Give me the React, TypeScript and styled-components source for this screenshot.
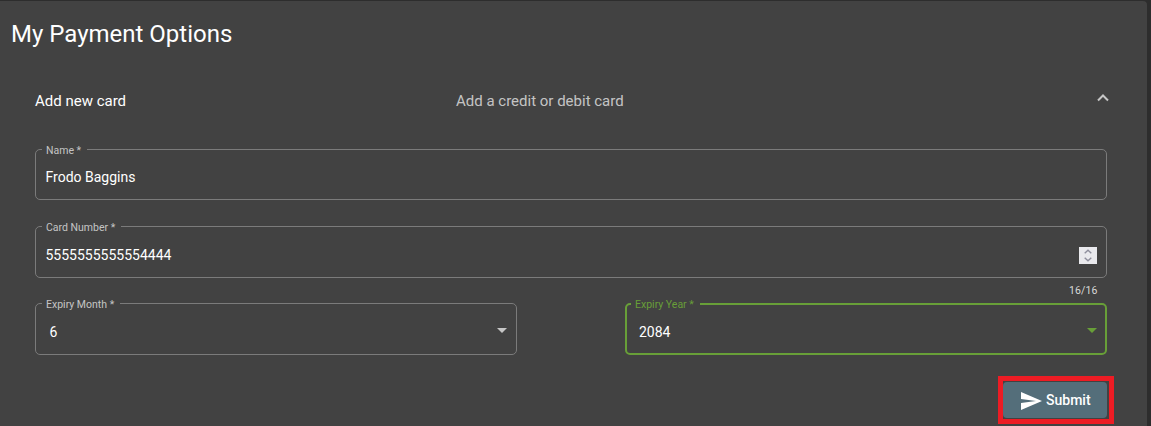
import React from "react";
import styled, { createGlobalStyle } from "styled-components";

const GlobalStyle = createGlobalStyle`
  * { box-sizing: border-box; }
  body {
    margin: 0;
    background: #303030;
    font-family: Roboto, "Liberation Sans", sans-serif;
    overflow: hidden;
  }
`;

const Page = styled.main`
  height: 426px;
  padding: 1px 4px 0 0;
  overflow: hidden;
  background: #2d2d2d;
`;

const Card = styled.section`
  height: 440px;
  background: #424242;
  border-radius: 0 4px 0 0;
  color: #fff;
`;

const Title = styled.h1`
  margin: 0;
  padding: 17px 0 0 11px;
  font-size: 24px;
  line-height: 32px;
  font-weight: 400;
`;

const PanelHeader = styled.header`
  display: grid;
  grid-template-columns: 421px 1fr 12px;
  align-items: center;
  height: 48px;
  margin: 27px 38px 0 35px;
  font-size: 15px;
`;

const PanelTitle = styled.span`
  color: #fff;
`;

const PanelDescription = styled.span`
  color: rgba(255, 255, 255, 0.7);
`;

const Chevron = styled.svg`
  display: block;
  width: 12px;
  height: 8px;
  margin-top: -6px;
`;

const Form = styled.form`
  display: flex;
  flex-direction: column;
  width: 1072px;
  margin: 24px 0 0 35px;
`;

const Field = styled.fieldset<{ $focused?: boolean; $tall?: boolean; $inset?: number }>`
  display: block;
  min-width: 0;
  height: ${(p) => (p.$tall ? 52 : 51)}px;
  margin: 0;
  padding: 0 9px 0 ${(p) => p.$inset ?? 9.5}px;
  border: ${(p) => (p.$focused ? "2px solid #689f38" : "1px solid #7b7b7b")};
  border-radius: 5px;
`;

const CardNumberField = styled(Field)`
  margin-top: 26px;
`;

const Label = styled.legend<{ $focused?: boolean; $shift: number }>`
  height: ${(p) => (p.$focused ? 2 : 1)}px;
  margin-left: ${(p) => p.$shift}px;
  padding: 0 6px 0 4px;
  font-size: 10.5px;
  line-height: 4px;
  white-space: nowrap;
  color: ${(p) => (p.$focused ? "#689f38" : "rgba(255, 255, 255, 0.7)")};
`;

const Value = styled.div<{ $offset?: number }>`
  display: flex;
  align-items: center;
  justify-content: space-between;
  height: 48px;
  padding-top: ${(p) => p.$offset ?? 7}px;
  font-size: 14px;
`;

const Spinner = styled.span`
  display: flex;
  flex-direction: column;
  align-items: center;
  justify-content: space-between;
  width: 18px;
  height: 17px;
  margin-top: 2px;
  padding: 2px 0;
  background: #e9e9ed;
`;

const SpinArrow = styled.svg`
  display: block;
  width: 8px;
  height: 5px;
`;

const Caret = styled.svg<{ $focused?: boolean }>`
  width: 10px;
  height: 5px;
  margin: -2px ${(p) => (p.$focused ? -1 : 0)}px 0 0;
  fill: ${(p) => (p.$focused ? "#689f38" : "#c6c6c6")};
`;

const Counter = styled.div`
  height: 25px;
  padding: 5px 9.5px 0 0;
  font-size: 10.5px;
  line-height: 15px;
  letter-spacing: 0.1px;
  text-align: right;
  color: rgba(255, 255, 255, 0.8);
`;

const ExpiryRow = styled.div`
  display: grid;
  grid-template-columns: 482px 482px;
  justify-content: space-between;
`;

const SubmitFrame = styled.div`
  align-self: flex-end;
  width: 116px;
  height: 48px;
  margin: 21px -7px 0 0;
  padding: 1px 0 0;
  border: 5px solid #ed1c24;
`;

const SubmitButton = styled.button`
  display: flex;
  align-items: center;
  gap: 4px;
  width: 104px;
  height: 36px;
  padding: 0 0 0 18px;
  border: 0;
  border-radius: 4px;
  background: #546e7a;
  color: #fff;
  font-family: inherit;
  font-size: 14px;
  font-weight: 500;
`;

const SendIcon = styled.svg`
  width: 21px;
  height: 18px;
  margin-top: 2px;
  fill: #fff;
`;

function SelectCaret({ focused = false }: { focused?: boolean }) {
  return (
    <Caret $focused={focused} viewBox="0 0 10 5" aria-hidden="true">
      <path d="M0 0h10L5 5z" />
    </Caret>
  );
}

export default function App() {
  return (
    <Page>
      <GlobalStyle />
      <Card>
        <Title>My Payment Options</Title>
        <PanelHeader>
          <PanelTitle>Add new card</PanelTitle>
          <PanelDescription>Add a credit or debit card</PanelDescription>
          <Chevron viewBox="0 0 12 8" aria-hidden="true">
            <path d="m1 6.5 5-5 5 5" fill="none" stroke="#c6c6c6" strokeWidth="2" />
          </Chevron>
        </PanelHeader>
        <Form>
          <Field>
            <Label $shift={-3.5}>Name *</Label>
            <Value $offset={5}>Frodo Baggins</Value>
          </Field>
          <CardNumberField $tall>
            <Label $shift={-3.5}>Card Number *</Label>
            <Value>
              5555555555554444
              <Spinner>
                <SpinArrow viewBox="0 0 8 5">
                  <path d="m.7 4.2 3.3-3 3.3 3" fill="none" stroke="#8f8f9d" strokeWidth="1.4" />
                </SpinArrow>
                <SpinArrow viewBox="0 0 8 5">
                  <path d="m.7.8 3.3 3 3.3-3" fill="none" stroke="#8f8f9d" strokeWidth="1.4" />
                </SpinArrow>
              </Spinner>
            </Value>
          </CardNumberField>
          <Counter>16/16</Counter>
          <ExpiryRow>
            <Field $tall $inset={13.5}>
              <Label $shift={-7.5}>Expiry Month *</Label>
              <Value>
                6
                <SelectCaret />
              </Value>
            </Field>
            <Field $tall $focused $inset={12}>
              <Label $focused $shift={-8}>Expiry Year *</Label>
              <Value $offset={5}>
                2084
                <SelectCaret focused />
              </Value>
            </Field>
          </ExpiryRow>
          <SubmitFrame>
            <SubmitButton type="button">
              <SendIcon viewBox="2 3 21 18" aria-hidden="true">
                <path d="M2.01 21 23 12 2.01 3 2 10l15 2-15 2z" />
              </SendIcon>
              Submit
            </SubmitButton>
          </SubmitFrame>
        </Form>
      </Card>
    </Page>
  );
}
